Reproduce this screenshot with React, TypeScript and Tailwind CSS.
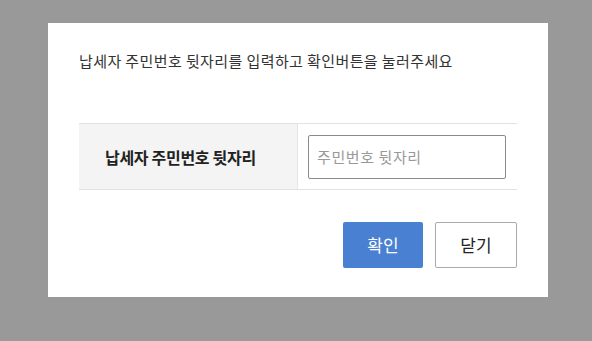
import React from "react";

const font = { fontFamily: '"Noto Sans CJK KR", "Noto Sans", sans-serif' };

const App = () => {
  return (
    <div className="min-h-screen w-full bg-[#999999] pt-[23px] pl-[48px]" style={font}>
      <div className="w-[500px] h-[274px] bg-white px-[31px]">
        {/* Guide text */}
        <p className="pt-[28px] text-[15px] leading-[20px] tracking-[0.4px] text-[#333333]">
          납세자 주민번호 뒷자리를 입력하고 확인버튼을 눌러주세요
        </p>

        {/* Input row */}
        <div className="mt-[52px] flex h-[67px] border-y border-[#e2e2e2]">
          <div className="w-[219px] bg-[#f4f4f4] border-r border-[#e6e6e6] flex items-center pl-[26px]">
            <span className="text-[16px] font-bold tracking-[-0.3px] text-[#222222]">
              납세자 주민번호 뒷자리
            </span>
          </div>
          <div className="flex-1 flex items-center pl-[10px]">
            <input
              type="text"
              placeholder="주민번호 뒷자리"
              className="w-[198px] h-[44px] border border-[#8a8a8a] rounded-[2px] px-[8px] text-[15px] tracking-[0.6px] text-[#333333] placeholder:text-[#999999] outline-none"
            />
          </div>
        </div>

        {/* Buttons */}
        <div className="mt-[32px] flex justify-end gap-[12px]">
          <button className="w-[80px] h-[46px] rounded-[2px] bg-[#4a80d2] text-white text-[17px]">
            확인
          </button>
          <button className="w-[82px] h-[46px] rounded-[2px] border border-[#aaaaaa] bg-white text-[#222222] text-[17px]">
            닫기
          </button>
        </div>
      </div>
    </div>
  );
};

export default App;
